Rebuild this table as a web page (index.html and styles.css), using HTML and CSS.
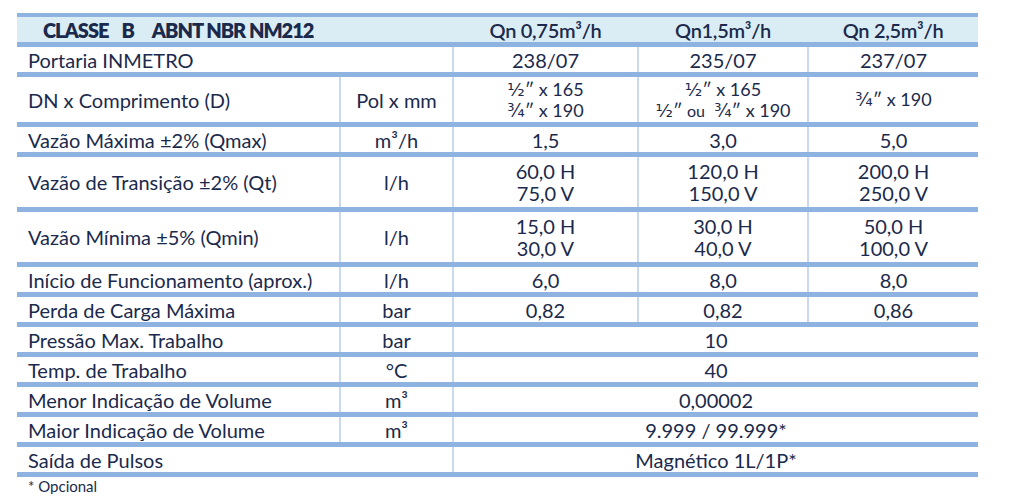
FILE: index.html
```html
<!DOCTYPE html>
<html lang="pt">
<head>
<meta charset="utf-8">
<title>Classe B ABNT NBR NM212</title>
<link rel="stylesheet" href="styles.css">
</head>
<body>
<table class="spec">
  <colgroup>
    <col class="c-label"><col class="c-unit"><col class="c-val"><col class="c-val2"><col class="c-val2">
  </colgroup>
  <thead>
    <tr class="head">
      <th colspan="2" class="title"><span class="w1">CLASSE</span><span class="w2">B</span>ABNT NBR NM212</th>
      <th>Qn 0,75m³/h</th>
      <th>Qn1,5m³/h</th>
      <th>Qn 2,5m³/h</th>
    </tr>
  </thead>
  <tbody>
    <tr><td colspan="2" class="label">Portaria INMETRO</td><td>238/07</td><td>235/07</td><td>237/07</td></tr>
    <tr class="r-dn"><td class="label">DN x Comprimento (D)</td><td>Pol x mm</td>
      <td class="small"><div><span class="frac">½</span>″ x 165</div><div><span class="frac">¾</span>″ x 190</div></td>
      <td class="small"><div><span class="frac">½</span>″ x 165</div><div><span class="frac">½</span>″ <span class="ou">ou</span>&nbsp; <span class="frac">¾</span>″ x 190</div></td>
      <td class="small"><span class="frac">¾</span>″ x 190</td></tr>
    <tr><td class="label">Vazão Máxima ±2% (Qmax)</td><td class="unit-s">m³/h</td><td>1,5</td><td>3,0</td><td>5,0</td></tr>
    <tr class="r-two"><td class="label">Vazão de Transição ±2% (Qt)</td><td>l/h</td>
      <td><div>60,0 H</div><div>75,0 V</div></td>
      <td><div>120,0 H</div><div>150,0 V</div></td>
      <td><div>200,0 H</div><div>250,0 V</div></td></tr>
    <tr class="r-two"><td class="label">Vazão Mínima ±5% (Qmin)</td><td>l/h</td>
      <td><div>15,0 H</div><div>30,0 V</div></td>
      <td><div>30,0 H</div><div>40,0 V</div></td>
      <td><div>50,0 H</div><div>100,0 V</div></td></tr>
    <tr><td class="label">Início de Funcionamento (aprox.)</td><td>l/h</td><td>6,0</td><td>8,0</td><td>8,0</td></tr>
    <tr><td class="label">Perda de Carga Máxima</td><td>bar</td><td>0,82</td><td>0,82</td><td>0,86</td></tr>
    <tr><td class="label">Pressão Max. Trabalho</td><td>bar</td><td colspan="3">10</td></tr>
    <tr><td class="label">Temp. de Trabalho</td><td>°C</td><td colspan="3">40</td></tr>
    <tr><td class="label">Menor Indicação de Volume</td><td>m³</td><td colspan="3">0,00002</td></tr>
    <tr><td class="label">Maior Indicação de Volume</td><td>m³</td><td colspan="3">9.999 / 99.999*</td></tr>
    <tr><td colspan="2" class="label">Saída de Pulsos</td><td colspan="3">Magnético 1L/1P*</td></tr>
  </tbody>
</table>
<p class="note">* Opcional</p>
</body>
</html>
```
FILE: styles.css
```css
html, body {
  margin: 0;
  padding: 0;
  background: #ffffff;
}
body {
  font-family: "Lato", "Noto Sans", sans-serif;
  color: #1b2a4c;
}
.spec {
  margin: 13px 0 0 17px;
  width: 961px;
  border-collapse: collapse;
  table-layout: fixed;
  border-top: 4px solid #8fb3e1;
}
.c-label { width: 323px; }
.c-unit { width: 113px; }
.c-val { width: 185px; }
.c-val2 { width: 170px; }
.spec td, .spec th {
  border-top: 5px solid #8fb3e1;
  border-bottom: 5px solid #8fb3e1;
  border-left: 2px solid #c9d9f0;
  border-right: 2px solid #c9d9f0;
  padding: 0;
  text-align: center;
  vertical-align: middle;
  font-size: 20px;
  line-height: 22px;
  height: 25px;
}
.spec td:first-child { border-left: none; }
.spec td:last-child { border-right: none; }
.head th {
  background: #dbedf4;
  border-left: none;
  border-right: none;
  border-top: none;
  font-weight: 600;
  font-size: 20px;
  letter-spacing: -0.3px;
}
.head .title {
  text-align: left;
  padding-left: 26px;
  font-weight: 800;
  letter-spacing: -1px;
}
.w1 { margin-right: 13px; }
.w2 { margin-right: 18px; }
.spec td.label {
  text-align: left;
  padding-left: 11px;
}
.r-dn td { height: 45px; }
.r-dn td.small { font-size: 18px; line-height: 21px; }
.frac { font-family: "DejaVu Sans", sans-serif; font-size: 18px; line-height: 18px; }
.ou { font-size: 16px; }
.unit-s { font-size: 17px; }
.r-two td { height: 50px; }
.note {
  margin: 1px 0 0 28px;
  font-size: 15px;
  line-height: 16px;
}
```
